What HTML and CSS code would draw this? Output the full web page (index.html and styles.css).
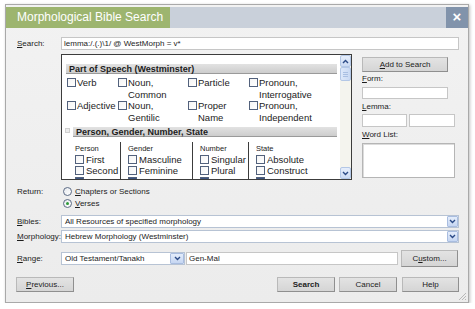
FILE: index.html
```html
<!DOCTYPE html>
<html>
<head>
<meta charset="utf-8">
<link rel="stylesheet" href="styles.css">
</head>
<body>
<div class="dialog">
  <div class="titlebar">
    <div class="tab">Morphological Bible Search</div>
    <div class="title-fill"></div>
    <div class="close">×</div>
  </div>
  <div class="body">
    <div class="row search-row">
      <div class="lbl"><u>S</u>earch:</div>
      <div class="input grow">lemma:/.(.)\1/ @ WestMorph = v*</div>
    </div>

    <div class="middle">
      <div class="listbox">
        <div class="list-content">
          <div class="band first-band">Part of Speech (Westminster)</div>
          <div class="pos-grid">
            <div class="cb-item"><span class="cb"></span><span class="cb-text">Verb</span></div>
            <div class="cb-item"><span class="cb"></span><span class="cb-text">Noun,<br>Common</span></div>
            <div class="cb-item"><span class="cb"></span><span class="cb-text">Particle</span></div>
            <div class="cb-item"><span class="cb"></span><span class="cb-text">Pronoun,<br>Interrogative</span></div>
            <div class="cb-item"><span class="cb"></span><span class="cb-text">Adjective</span></div>
            <div class="cb-item"><span class="cb"></span><span class="cb-text">Noun,<br>Gentilic</span></div>
            <div class="cb-item"><span class="cb"></span><span class="cb-text">Proper<br>Name</span></div>
            <div class="cb-item"><span class="cb"></span><span class="cb-text">Pronoun,<br>Independent</span></div>
          </div>
          <div class="band-row">
            <span class="minus"></span>
            <div class="band">Person, Gender, Number, State</div>
          </div>
          <div class="cols">
            <div class="col c1">
              <div class="col-title">Person</div>
              <div class="col-item"><span class="cb"></span>First</div>
              <div class="col-item"><span class="cb"></span>Second</div>
              <div class="col-item"><span class="cb cut"></span></div>
            </div>
            <div class="col c2">
              <div class="col-title">Gender</div>
              <div class="col-item"><span class="cb"></span>Masculine</div>
              <div class="col-item"><span class="cb"></span>Feminine</div>
              <div class="col-item"><span class="cb cut"></span></div>
            </div>
            <div class="col c3">
              <div class="col-title">Number</div>
              <div class="col-item"><span class="cb"></span>Singular</div>
              <div class="col-item"><span class="cb"></span>Plural</div>
              <div class="col-item"><span class="cb cut"></span></div>
            </div>
            <div class="col c4">
              <div class="col-title">State</div>
              <div class="col-item"><span class="cb"></span>Absolute</div>
              <div class="col-item"><span class="cb"></span>Construct</div>
              <div class="col-item"><span class="cb cut"></span></div>
            </div>
          </div>
        </div>
        <div class="scrollbar">
          <div class="sb-btn"><svg width="7" height="5" viewBox="0 0 7 5"><path d="M1 4 L3.5 1.5 L6 4" fill="none" stroke="#2b4a86" stroke-width="1.4"/></svg></div>
          <div class="sb-thumb"><span></span><span></span><span></span></div>
          <div class="sb-track"></div>
          <div class="sb-btn"><svg width="7" height="5" viewBox="0 0 7 5"><path d="M1 1 L3.5 3.5 L6 1" fill="none" stroke="#2b4a86" stroke-width="1.4"/></svg></div>
        </div>
      </div>

      <div class="side">
        <div class="btn add-btn"><span><u>A</u>dd to Search</span></div>
        <div class="side-lbl form-lbl"><u>F</u>orm:</div>
        <div class="input form-input"></div>
        <div class="side-lbl"><u>L</u>emma:</div>
        <div class="lemma-row">
          <div class="input lemma-a"></div>
          <div class="input lemma-b"></div>
        </div>
        <div class="side-lbl"><u>W</u>ord List:</div>
        <div class="wordlist"></div>
      </div>
    </div>

    <div class="row return-row">
      <div class="lbl">Return:</div>
      <div class="radios">
        <div class="radio-item"><span class="radio"></span><span><u>C</u>hapters or Sections</span></div>
        <div class="radio-item"><span class="radio checked"></span><span><u>V</u>erses</span></div>
      </div>
    </div>

    <div class="row bibles-row">
      <div class="lbl"><u>B</u>ibles:</div>
      <div class="select grow"><span class="sel-text">All Resources of specified morphology</span><span class="sel-arrow"><svg width="7" height="5" viewBox="0 0 7 5"><path d="M1 1 L3.5 3.5 L6 1" fill="none" stroke="#2b4a86" stroke-width="1.4"/></svg></span></div>
    </div>
    <div class="row morph-row">
      <div class="lbl"><u>M</u>orphology:</div>
      <div class="select grow"><span class="sel-text">Hebrew Morphology (Westminster)</span><span class="sel-arrow"><svg width="7" height="5" viewBox="0 0 7 5"><path d="M1 1 L3.5 3.5 L6 1" fill="none" stroke="#2b4a86" stroke-width="1.4"/></svg></span></div>
    </div>
    <div class="row range-row">
      <div class="lbl"><u>R</u>ange:</div>
      <div class="select range-sel"><span class="sel-text">Old Testament/Tanakh</span><span class="sel-arrow big"><svg width="7" height="5" viewBox="0 0 7 5"><path d="M1 1 L3.5 3.5 L6 1" fill="none" stroke="#2b4a86" stroke-width="1.4"/></svg></span></div>
      <div class="input range-input">Gen-Mal</div>
      <div class="btn custom-btn"><span>C<u>u</u>stom...</span></div>
    </div>

    <div class="row buttons-row">
      <div class="btn prev-btn"><span><u>P</u>revious...</span></div>
      <div class="fill"></div>
      <div class="btn search-btn"><span>Search</span></div>
      <div class="btn cancel-btn"><span>Cancel</span></div>
      <div class="btn help-btn"><span>Help</span></div>
    </div>
  </div>
  <svg class="grip" width="9" height="9" viewBox="0 0 9 9"><path d="M8 1 L1 8 M8 4 L4 8 M8 7 L7 8" stroke="#b8b8b8" stroke-width="1"/></svg>
</div>
</body>
</html>
```

FILE: styles.css
```css
body {
  margin: 0;
  background: #ffffff;
  font-family: "Liberation Sans", Arial, sans-serif;
  color: #1c1c1c;
}

.dialog {
  position: relative;
  margin: 4px 0 0 5px;
  width: 464px;
  height: 299px;
  box-sizing: border-box;
  border: 1px solid #a9a9a9;
  background: linear-gradient(#f2f2f2, #ececec);
  box-shadow: 1px 1px 3px rgba(0, 0, 0, 0.25);
  padding-top: 2px;
}

.titlebar {
  display: flex;
  height: 21px;
  background: #c9d0da;
}

.tab {
  width: 164px;
  box-sizing: border-box;
  padding-left: 11px;
  background: #9db56f;
  color: #ffffff;
  font-size: 12px;
  line-height: 21px;
  white-space: nowrap;
}

.title-fill {
  flex: 1;
}

.close {
  width: 22px;
  background: #8193ab;
  color: #ffffff;
  font-size: 15px;
  font-weight: bold;
  line-height: 20px;
  text-align: center;
}

.body {
  padding: 9px 9px 0 11px;
  font-size: 8px;
}

.row {
  display: flex;
  align-items: center;
}

.lbl {
  width: 44px;
  flex: none;
  font-size: 8px;
  white-space: nowrap;
}

.grow {
  flex: 1;
}

.input {
  height: 13px;
  box-sizing: border-box;
  background: #ffffff;
  border: 1px solid #c6c6c6;
  font-size: 8px;
  line-height: 11px;
  padding-left: 2px;
  white-space: nowrap;
  overflow: hidden;
}

/* middle area */
.middle {
  display: flex;
  margin-top: 4px;
  padding-left: 44px;
}

.listbox {
  width: 291px;
  height: 126px;
  box-sizing: border-box;
  border: 1px solid #3c3c3c;
  background: #ffffff;
  display: flex;
}

.list-content {
  flex: 1;
  overflow: hidden;
  padding-top: 9px;
}

.band {
  height: 10px;
  box-sizing: border-box;
  background: linear-gradient(#e2e2e2, #cdcdcd);
  border-bottom: 1px solid #9a9a9a;
  font-size: 9px;
  font-weight: bold;
  line-height: 10px;
  padding-left: 3px;
  white-space: nowrap;
}

.first-band {
  margin: 0 3px 0 4px;
}

.pos-grid {
  display: grid;
  grid-template-columns: 51px 70px 61px 1fr;
  padding-left: 5px;
  margin-top: 3px;
  font-size: 9.5px;
  line-height: 11.5px;
}

.cb-item {
  display: flex;
  align-items: flex-start;
}

.cb {
  flex: none;
  width: 9px;
  height: 9px;
  box-sizing: border-box;
  border: 1px solid #52617c;
  background: linear-gradient(135deg, #f4f4f4, #ffffff);
  margin-right: 1px;
}

.cb.cut {
  background: #3d5581;
}

.cb-item .cb {
  margin-top: 1px;
}

.band-row {
  display: flex;
  align-items: center;
  margin: 4px 3px 0 3px;
}

.band-row .band {
  flex: 1;
}

.minus {
  width: 5px;
  height: 5px;
  box-sizing: border-box;
  border: 1px solid #d0d0d0;
  background: #ececec;
  margin-right: 3px;
  margin-top: -4px;
}

.cols {
  display: flex;
  margin-top: 5px;
  padding-left: 5px;
}

.col {
  box-sizing: border-box;
  padding-left: 7px;
  padding-top: 2px;
  font-size: 9.5px;
  white-space: nowrap;
}

.c1 {
  width: 53px;
  padding-left: 8px;
}

.c2 {
  width: 72px;
  border-left: 1px solid #3c3c3c;
}

.c3 {
  width: 56px;
  border-left: 1px solid #3c3c3c;
}

.c4 {
  flex: 1;
  border-left: 1px solid #3c3c3c;
}

.col-title {
  font-size: 7.5px;
  line-height: 9.5px;
}

.col-item {
  display: flex;
  align-items: center;
  height: 11px;
  line-height: 11px;
}

.col-item .cb {
  margin-right: 2px;
}

.scrollbar {
  width: 11px;
  display: flex;
  flex-direction: column;
  background: #f4f4ee;
}

.sb-btn {
  height: 12px;
  box-sizing: border-box;
  border: 1px solid #b3c7e6;
  border-radius: 2px;
  background: linear-gradient(#e6eefb, #cbdaf3);
  display: flex;
  align-items: center;
  justify-content: center;
}

.sb-thumb {
  height: 14px;
  box-sizing: border-box;
  border: 1px solid #b3c7e6;
  border-radius: 2px;
  background: linear-gradient(90deg, #dde8fa, #c9d9f3);
  display: flex;
  flex-direction: column;
  align-items: center;
  justify-content: center;
  gap: 1px;
}

.sb-thumb span {
  width: 5px;
  height: 1px;
  background: #a9bfe2;
}

.sb-track {
  flex: 1;
}

/* side panel */
.side {
  margin-left: 10px;
  width: 94px;
  display: flex;
  flex-direction: column;
}

.btn {
  height: 15px;
  box-sizing: border-box;
  border: 1px solid #b9b9b9;
  border-right-color: #8f8f8f;
  border-bottom-color: #8f8f8f;
  background: linear-gradient(#e3e3e3, #d5d5d5);
  display: flex;
  align-items: center;
  justify-content: center;
  font-size: 8px;
  white-space: nowrap;
}

.add-btn {
  margin-top: 3px;
  width: 86px;
}

.side-lbl {
  font-size: 8px;
  line-height: 10px;
  margin-top: 3px;
}

.form-lbl {
  margin-top: 2px;
}

.form-input {
  margin-top: 3px;
  width: 86px;
  height: 12px;
}

.lemma-row {
  display: flex;
  margin-top: 2px;
  gap: 2px;
}

.lemma-a {
  width: 45px;
}

.lemma-b {
  width: 46px;
}

.wordlist {
  margin-top: 3px;
  width: 93px;
  height: 35px;
  box-sizing: border-box;
  background: #ffffff;
  border: 1px solid #b5b5b5;
  box-shadow: inset 1px 1px 0 #dcdcdc;
}

/* return */
.return-row {
  margin-top: 6px;
  align-items: flex-start;
}

.return-row .lbl {
  line-height: 11.5px;
}

.radios {
  display: flex;
  flex-direction: column;
}

.radio-item {
  display: flex;
  align-items: center;
  height: 11.5px;
  font-size: 8px;
}

.radio {
  width: 9px;
  height: 9px;
  box-sizing: border-box;
  border: 1px solid #5c6b85;
  border-radius: 50%;
  background: linear-gradient(135deg, #e6e9ee, #ffffff);
  margin: 0 3px 0 2px;
  display: flex;
  align-items: center;
  justify-content: center;
}

.radio.checked::after {
  content: "";
  width: 3px;
  height: 3px;
  border-radius: 50%;
  background: #2f9a3a;
}

/* selects */
.select {
  height: 13px;
  box-sizing: border-box;
  background: #ffffff;
  border: 1px solid #b7c3d4;
  display: flex;
  align-items: center;
  font-size: 8px;
}

.sel-text {
  flex: 1;
  padding-left: 3px;
  white-space: nowrap;
  overflow: hidden;
}

.sel-arrow {
  width: 11px;
  height: 11px;
  box-sizing: border-box;
  border: 1px solid #a9bde0;
  border-radius: 1px;
  background: linear-gradient(#e4edfb, #c6d6f2);
  display: flex;
  align-items: center;
  justify-content: center;
}

.sel-arrow.big {
  width: 14px;
}

.bibles-row {
  margin-top: 6px;
}

.morph-row {
  margin-top: 2px;
}

.range-row {
  margin-top: 7px;
  height: 17px;
}

.range-sel {
  width: 124px;
}

.range-input {
  margin-left: 1px;
  width: 212px;
}

.custom-btn {
  margin-left: 3px;
  width: 57px;
  height: 17px;
}

.buttons-row {
  margin-top: 10px;
}

.fill {
  flex: 1;
}

.prev-btn {
  margin-left: -1px;
  width: 58px;
}

.search-btn {
  width: 58px;
  font-weight: bold;
}

.cancel-btn {
  width: 58px;
  margin-left: 4px;
}

.help-btn {
  width: 57px;
  margin-left: 5px;
}

.grip {
  position: absolute;
  right: 1px;
  bottom: 1px;
}
```
